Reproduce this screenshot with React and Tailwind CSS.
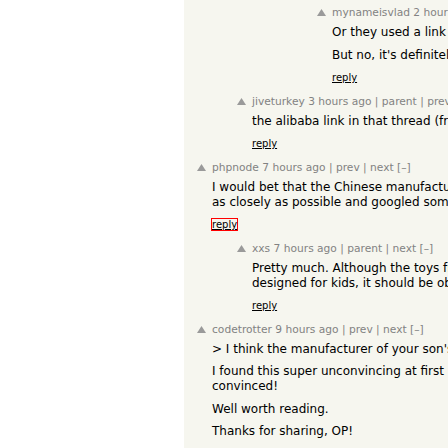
import React from 'react';

const comments = [
  {
    level: 3,
    meta: 'mynameisvlad 2 hours ago | parent | prev | next [–]',
    paras: [['Or they used a link shortener that got flagged.'], ["But no, it's definitely the Chinese manufacturer."]],
  },
  {
    level: 1,
    meta: 'jiveturkey 3 hours ago | parent | prev | next [–]',
    paras: [['the alibaba link in that thread (from the product listing) works fine for me.']],
  },
  {
    level: 0,
    meta: 'phpnode 7 hours ago | prev | next [–]',
    paras: [
      [
        'I would bet that the Chinese manufacturer copied the original design',
        'as closely as possible and googled something to put on the box.',
      ],
    ],
    focused: true,
  },
  {
    level: 1,
    meta: 'xxs 7 hours ago | parent | next [–]',
    paras: [
      [
        'Pretty much. Although the toys from that factory are',
        'designed for kids, it should be obvious it was never checked.',
      ],
    ],
  },
  {
    level: 0,
    meta: 'codetrotter 9 hours ago | prev | next [–]',
    paras: [
      ['> I think the manufacturer of your son\'s toy just copied it.'],
      ['I found this super unconvincing at first but by the end I was', 'convinced!'],
      ['Well worth reading.'],
      ['Thanks for sharing, OP!'],
    ],
    noReply: true,
  },
];

const Arrow = () => (
  <svg width="9" height="7" viewBox="0 0 9 7" className="mt-[3px] block">
    <polygon points="4.5,0 9,7 0,7" fill="#9a9a9a" />
  </svg>
);

const Comment = ({ c }) => {
  const pad = ['pl-[13px]', 'pl-[53px]', 'pl-[93px]', 'pl-[133px]'][c.level];
  return (
    <div className={`flex ${pad} mb-[10.5px]`}>
      <div className="w-[15px] shrink-0">
        <Arrow />
      </div>
      <div className="min-w-0">
        <div className="h-[14px] leading-[14px] text-[8pt] text-[#828282] whitespace-nowrap">{c.meta}</div>
        <div className="mt-[5px] text-[12px] text-black">
          {c.paras.map((lines, i) => (
            <p key={i} className={`leading-[15px] whitespace-nowrap ${i > 0 ? 'mt-[7.5px]' : ''}`}>
              {lines.map((l, j) => (
                <React.Fragment key={j}>
                  {j > 0 && <br />}
                  {l}
                </React.Fragment>
              ))}
            </p>
          ))}
        </div>
        {!c.noReply && (
          <div className="mt-[8.5px] h-[13px] leading-[13px] text-[10px] text-black">
            <span className={`underline ${c.focused ? 'ring-1 ring-[#ff0000]' : ''}`}>reply</span>
          </div>
        )}
      </div>
    </div>
  );
};

export default function App() {
  return (
    <div className="w-[448px] h-[448px] overflow-hidden flex bg-white" style={{ fontFamily: '"DejaVu Sans", Verdana, sans-serif' }}>
      <div className="w-[184px] shrink-0 bg-white" />
      <div className="flex-1 min-w-0 bg-[#f6f6ef] pt-[6px] overflow-hidden">
        {comments.map((c, i) => (
          <Comment key={i} c={c} />
        ))}
      </div>
    </div>
  );
}
